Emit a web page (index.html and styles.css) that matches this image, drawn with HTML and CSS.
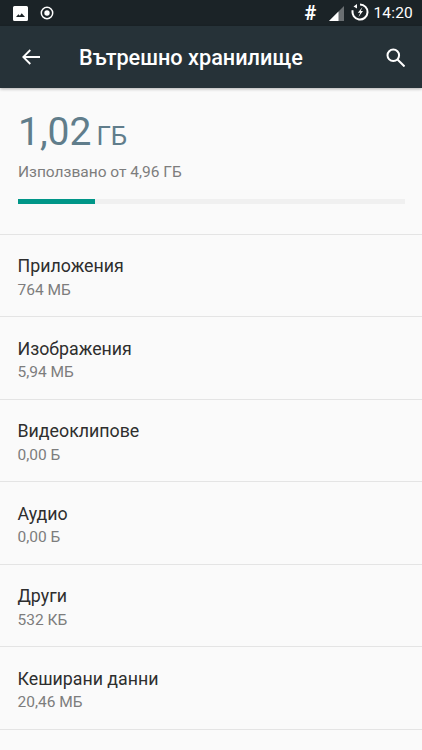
FILE: index.html
```html
<!DOCTYPE html>
<html lang="bg">
<head>
<meta charset="utf-8">
<title>Вътрешно хранилище</title>
<link rel="stylesheet" href="styles.css">
</head>
<body>
<div class="screen">
  <div class="status">
    <div class="status-left">
      <svg class="ic-img" viewBox="0 0 15 15"><path fill="#fff" d="M1.500 0h12A1.500 1.500 0 0 1 15 1.500v12a1.500 1.500 0 0 1-1.500 1.500h-12A1.500 1.500 0 0 1 0 13.500v-12A1.500 1.500 0 0 1 1.500 0z"/><path fill="#1b2327" d="M3 11l2.400-2.800 1.500 1.500 1.800-2.500 3.300 3.800z"/></svg>
      <svg class="ic-rec" viewBox="0 0 14 14"><circle cx="7" cy="7" r="5.700" fill="none" stroke="#fff" stroke-width="1.500"/><circle cx="7" cy="7" r="2.700" fill="#fff"/></svg>
    </div>
    <div class="status-right">
      <span class="hash">#</span>
      <svg class="ic-signal" viewBox="0 0 15 15"><path fill="#fff" d="M15 0v15H0z" opacity=".35"/><path fill="#fff" d="M9.500 5.500V15H0z"/></svg>
      <svg class="ic-batt" viewBox="0 0 18 18"><path fill="none" stroke="#fff" stroke-width="2" d="M9 1.500a7.500 7.500 0 1 1-7.300 5.800"/><path fill="#fff" d="M2.500 3.500L6 1v4.500zM11.500 4L6.800 9.700h2.400L7.500 14l4.500-6H9.700z"/></svg>
      <span class="clock">14:20</span>
    </div>
  </div>
  <header class="appbar">
    <svg class="ic-back" viewBox="0 0 18 16"><path fill="none" stroke="#fff" stroke-width="1.800" d="M18 8H1.500M8.300 1L1.300 8l7 7"/></svg>
    <h1 class="title">Вътрешно хранилище</h1>
    <svg class="ic-search" viewBox="0 0 19 19"><circle cx="7.300" cy="7.300" r="5.800" fill="none" stroke="#fff" stroke-width="2"/><path fill="none" stroke="#fff" stroke-width="2" d="M11.500 11.500l7 7"/></svg>
  </header>
  <section class="summary">
    <div class="amount"><span class="big">1,02</span> <span class="unit">ГБ</span></div>
    <div class="used">Използвано от 4,96 ГБ</div>
    <div class="bar"><div class="bar-fill"></div></div>
  </section>
  <ul class="list">
    <li class="row"><div class="name">Приложения</div><div class="size">764 МБ</div></li>
    <li class="row"><div class="name">Изображения</div><div class="size">5,94 МБ</div></li>
    <li class="row"><div class="name">Видеоклипове</div><div class="size">0,00 Б</div></li>
    <li class="row"><div class="name">Аудио</div><div class="size">0,00 Б</div></li>
    <li class="row"><div class="name">Други</div><div class="size">532 КБ</div></li>
    <li class="row"><div class="name">Кеширани данни</div><div class="size">20,46 МБ</div></li>
  </ul>
</div>
</body>
</html>
```

FILE: styles.css
```css
html, body {
  margin: 0;
  padding: 0;
}
body {
  font-family: Roboto, "Liberation Sans", sans-serif;
  background: #fafafa;
}
.screen {
  width: 422px;
  height: 750px;
  overflow: hidden;
  background: #fafafa;
}
.status {
  height: 26px;
  background: #1b2327;
  display: flex;
  justify-content: space-between;
  align-items: center;
  color: #fff;
}
.status-left {
  display: flex;
  align-items: center;
  gap: 12px;
  padding-left: 13px;
}
.ic-img { width: 15px; height: 15px; }
.ic-rec { width: 14px; height: 14px; }
.status-right {
  display: flex;
  align-items: center;
  padding-right: 9px;
}
.hash {
  font-size: 20px;
  font-weight: 700;
  width: 14px;
  margin-right: 12px;
  text-align: center;
}
.ic-signal { width: 15px; height: 15px; margin-right: 7px; }
.ic-batt { width: 18px; height: 18px; margin-right: 4px; margin-top: -2px; }
.clock { font-size: 15.500px; letter-spacing: 0.2px; }
.appbar {
  height: 62px;
  background: #263238;
  display: flex;
  align-items: center;
  box-shadow: 0 1px 3px rgba(0,0,0,.3);
  position: relative;
}
.ic-back { width: 18px; height: 16px; margin-left: 22px; flex: none; }
.title {
  margin: 0 0 0 39px;
  font-size: 21.700px;
  font-weight: 500;
  color: #fff;
  flex: 1;
}
.ic-search { width: 19px; height: 19px; margin-right: 17px; flex: none; }
.summary {
  height: 145.900px;
  padding: 0 17px 0 18px;
  border-bottom: 1px solid #e4e4e4;
  box-sizing: content-box;
}
.amount {
  padding-top: 19px;
  height: 50px;
  color: #607d8b;
  line-height: 50px;
}
.big { font-size: 39px; }
.unit { font-size: 26px; margin-left: 1px; }
.used {
  margin-top: 5px;
  font-size: 15.500px;
  color: #7d7d7d;
  line-height: 20px;
}
.bar {
  margin-top: 17px;
  height: 5px;
  background: #f0f0f0;
}
.bar-fill {
  width: 77px;
  height: 5px;
  background: #009688;
}
.list {
  list-style: none;
  margin: 0;
  padding: 0;
}
.row {
  height: 82.500px;
  padding: 20.200px 18px 0 17.500px;
  box-sizing: border-box;
  border-bottom: 1px solid #e4e4e4;
}
.name {
  font-size: 17.800px;
  line-height: 22px;
  color: #2e2e2e;
}
.size {
  margin-top: 2.500px;
  font-size: 15.500px;
  line-height: 20px;
  color: #7d7d7d;
}
```
